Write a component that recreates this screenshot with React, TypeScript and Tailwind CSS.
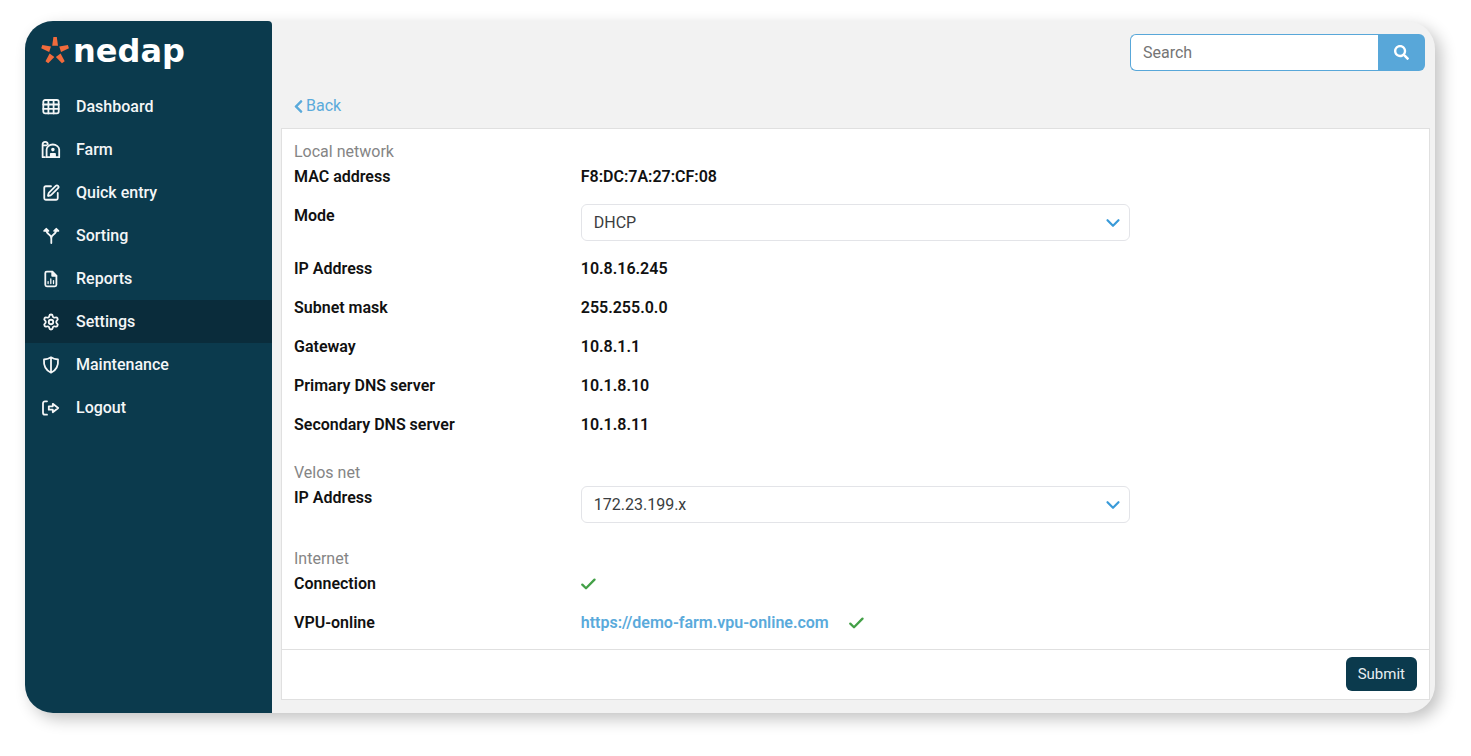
import React from "react";
import { FaChevronLeft, FaSearch } from "react-icons/fa";
import { ChevronDown, Settings, SquarePen } from "lucide-react";

const line = {
  fill: "none",
  stroke: "currentColor",
  strokeWidth: 1.8,
  strokeLinecap: "round" as const,
  strokeLinejoin: "round" as const,
};

function GridIcon() {
  return (
    <svg viewBox="0 0 18 18" className="size-[18px]" aria-hidden="true" {...line}>
      <rect x="1.3" y="2" width="15.4" height="13.4" rx="1.8" />
      <path d="M6.4 2v13.4M11.6 2v13.4M1.3 6.5h15.4M1.3 10.9h15.4" />
    </svg>
  );
}

function BarnIcon() {
  return (
    <svg viewBox="0 0 18 18" className="size-[18px] overflow-visible" aria-hidden="true" {...line}>
      <path d="M0.6 16.2V3.4a2.6 2.6 0 0 1 5.2 0M0.6 4.4h4M3 16.2H0.6" />
      <path d="M4.6 16.2V8.4c0-2.2 2.6-4.9 6.2-4.9s6.4 2.7 6.4 4.9v7.8z" />
      <path d="M8.8 16.2v-3.4h4.2v3.4z" fill="currentColor" />
      <circle cx="10.9" cy="8.6" r="0.9" fill="currentColor" />
    </svg>
  );
}

function SplitIcon() {
  return (
    <svg viewBox="0 0 18 18" className="size-[18px]" aria-hidden="true" {...line}>
      <path d="M9.300 16v-5.200c0-1.400-.7-2-2-3C5.200 6.500 4.300 5.600 4.300 2.600" />
      <path d="M9.300 10.800c0-1.400.7-2 2-3 2.100-1.300 3-2.200 3-5.200" />
      <path d="M2.200 3.900 4.300 1.800 6.400 3.900zM12.200 3.900l2.100-2.100 2.100 2.100z" fill="currentColor" />
    </svg>
  );
}

function ReportIcon() {
  return (
    <svg viewBox="0 0 18 18" className="size-[18px]" aria-hidden="true" {...line}>
      <path d="M4.800 1.600h5.400l4.200 4.200v9a1.500 1.500 0 0 1-1.500 1.500H4.800a1.500 1.500 0 0 1-1.500-1.500V3.100a1.500 1.500 0 0 1 1.500-1.500z" />
      <path d="M10.200 1.600v4.200h4.200z" fill="currentColor" />
      <path d="M6.100 13.600v-2M8.800 13.600V8.800M11.500 13.600v-3" strokeWidth="1.3" />
    </svg>
  );
}

function ShieldIcon() {
  return (
    <svg viewBox="0 0 18 18" className="size-[18px]" aria-hidden="true" {...line}>
      <path d="M9 1.300c2 1.400 4.300 2 7 2.200.5 6-1.700 10.800-7 13.200C3.700 14.300 1.500 9.500 2 3.500c2.700-.2 5-.8 7-2.200zM9 1.300v15.400" />
    </svg>
  );
}

function ExitIcon() {
  return (
    <svg viewBox="0 0 18 18" className="size-[18px]" aria-hidden="true" {...line}>
      <path d="M5 2.300H3a2 2 0 0 0-2 2v9.400a2 2 0 0 0 2 2h2" />
      <path d="M6.800 7.300h4V4.800L16.200 9l-5.400 4.200v-2.500h-4z" />
    </svg>
  );
}

function Tick() {
  return (
    <svg
      viewBox="0 0 16 16"
      className="size-4 text-[#43a047]"
      role="img"
      aria-label="OK"
      {...line}
      strokeWidth={2.3}
    >
      <path d="M1.300 8.600 5 12.200 13.500 3.600" />
    </svg>
  );
}

const nav = [
  { label: "Dashboard", icon: <GridIcon /> },
  { label: "Farm", icon: <BarnIcon /> },
  { label: "Quick entry", icon: <SquarePen size={18} strokeWidth={2.4} aria-hidden="true" /> },
  { label: "Sorting", icon: <SplitIcon /> },
  { label: "Reports", icon: <ReportIcon /> },
  { label: "Settings", icon: <Settings size={18} strokeWidth={2.4} aria-hidden="true" />, active: true },
  { label: "Maintenance", icon: <ShieldIcon /> },
  { label: "Logout", icon: <ExitIcon /> },
];

function Logo() {
  return (
    <a href="#" className="flex h-9 items-center gap-1 pl-4 text-white">
      <svg viewBox="0 0 28 28" className="size-7 shrink-0" fill="#f26b3c" aria-hidden="true">
        {[0, 72, 144, 216, 288].map((angle) => (
          <path key={angle} d="M12.400 0h3.400l1.200 8.700h-5.800z" transform={`rotate(${angle} 14.100 14)`} />
        ))}
      </svg>
      <span className="font-['DejaVu_Sans',sans-serif] text-[32px] leading-8 font-bold">nedap</span>
    </a>
  );
}

function Row({ label, htmlFor, children }: { label: string; htmlFor?: string; children: React.ReactNode }) {
  return (
    <div className="grid grid-cols-4 leading-6 font-semibold text-[#111]">
      <div className="px-3">{htmlFor ? <label htmlFor={htmlFor}>{label}</label> : label}</div>
      <div className="col-span-2 px-3">{children}</div>
    </div>
  );
}

function Choice({ id, options }: { id: string; options: string[] }) {
  return (
    <div className="relative">
      <select
        id={id}
        className="block h-[37px] w-full appearance-none rounded-md border border-[#e3e4e8] bg-white px-3 font-normal text-[#3a3d40]"
      >
        {options.map((option) => (
          <option key={option}>{option}</option>
        ))}
      </select>
      <ChevronDown
        size={22}
        strokeWidth={2.4}
        className="pointer-events-none absolute top-2 right-[6px] text-[#3a9bd9]"
        aria-hidden="true"
      />
    </div>
  );
}

function Section({ title, children }: { title: string; children: React.ReactNode }) {
  return (
    <section>
      <h2 className="px-3 pb-px leading-6 text-[#858585]">{title}</h2>
      <div className="flex flex-col gap-[15px]">{children}</div>
    </section>
  );
}

export default function App() {
  return (
    <div className="min-h-screen bg-white pt-[21px] pr-9 pb-[43px] pl-[25px] font-['Roboto',sans-serif] text-base">
      <div className="flex overflow-hidden rounded-[28px] bg-[#f2f2f2] shadow-[6px_6px_16px_rgba(0,0,0,0.24)]">
        <aside className="w-[247px] shrink-0 rounded-tr-sm bg-[#0b3a4d] pt-3">
          <Logo />
          <nav className="mt-4">
            {nav.map((item) => (
              <a
                key={item.label}
                href="#"
                aria-current={item.active ? "page" : undefined}
                className={`flex h-[43px] items-center gap-4 pl-[17px] font-medium text-[#f4f6f7] ${item.active ? "bg-[#0a2c3b]" : ""}`}
              >
                {item.icon}
                {item.label}
              </a>
            ))}
          </nav>
        </aside>
        <main className="min-w-0 flex-1 pt-[13px] pr-[5px] pb-[13px] pl-[9px]">
          <form className="mr-[5px] ml-auto flex h-[37px] w-[295px]" onSubmit={(e) => e.preventDefault()}>
            <input
              type="search"
              aria-label="Search"
              placeholder="Search"
              className="min-w-0 flex-1 rounded-l-md border border-r-0 border-[#58a7d9] bg-white px-3 placeholder:text-[#757575]"
            />
            <button
              type="submit"
              aria-label="Search"
              className="flex w-[47px] items-center justify-center rounded-r-md bg-[#58a7d9] text-white"
            >
              <FaSearch size={15} />
            </button>
          </form>
          <a href="#" className="mt-[23px] ml-[10px] flex w-fit items-center leading-6 text-[#5aaadb]">
            <FaChevronLeft size={15} />
            Back
          </a>
          <div className="mt-[10px] border border-[#e0e0e0] bg-white">
            <div className="flex flex-col gap-6 pt-[11px] pb-[14px]">
              <Section title="Local network">
                <Row label="MAC address">F8:DC:7A:27:CF:08</Row>
                <div className="pb-px">
                  <Row label="Mode" htmlFor="mode">
                    <Choice id="mode" options={["DHCP", "Static"]} />
                  </Row>
                </div>
                <Row label="IP Address">10.8.16.245</Row>
                <Row label="Subnet mask">255.255.0.0</Row>
                <Row label="Gateway">10.8.1.1</Row>
                <Row label="Primary DNS server">10.1.8.10</Row>
                <Row label="Secondary DNS server">10.1.8.11</Row>
              </Section>
              <Section title="Velos net">
                <Row label="IP Address" htmlFor="velos-ip">
                  <Choice id="velos-ip" options={["172.23.199.x"]} />
                </Row>
              </Section>
              <Section title="Internet">
                <Row label="Connection">
                  <span className="flex h-6 items-center">
                    <Tick />
                  </span>
                </Row>
                <Row label="VPU-online">
                  <span className="flex items-center gap-5">
                    <a href="https://demo-farm.vpu-online.com" className="text-[#5aaadb]">
                      https://demo-farm.vpu-online.com
                    </a>
                    <Tick />
                  </span>
                </Row>
              </Section>
            </div>
            <div className="flex justify-end border-t border-[#e0e0e0] px-3 pt-[7px] pb-2">
              <button type="submit" className="h-[34px] rounded-md bg-[#0b3a4d] px-3 text-[15px] text-[#e8eef1]">
                Submit
              </button>
            </div>
          </div>
        </main>
      </div>
    </div>
  );
}
